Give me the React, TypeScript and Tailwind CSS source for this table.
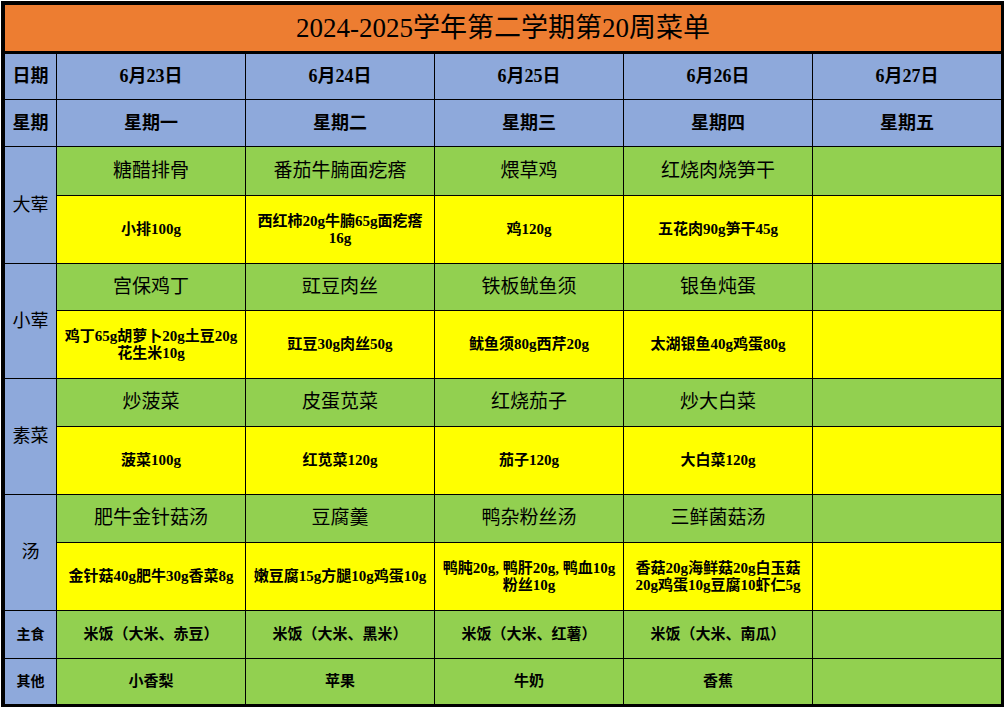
const font = { fontFamily: '"Liberation Serif", "Noto Sans CJK SC", serif' };

const dates = ["6月23日", "6月24日", "6月25日", "6月26日", "6月27日"];
const weekdays = ["星期一", "星期二", "星期三", "星期四", "星期五"];

type Course = { label: string; dishes: string[]; details: string[][] };

const courses: Course[] = [
  {
    label: "大荤",
    dishes: ["糖醋排骨", "番茄牛腩面疙瘩", "煨草鸡", "红烧肉烧笋干", ""],
    details: [["小排100g"], ["西红柿20g牛腩65g面疙瘩", "16g"], ["鸡120g"], ["五花肉90g笋干45g"], []],
  },
  {
    label: "小荤",
    dishes: ["宫保鸡丁", "豇豆肉丝", "铁板鱿鱼须", "银鱼炖蛋", ""],
    details: [["鸡丁65g胡萝卜20g土豆20g", "花生米10g"], ["豇豆30g肉丝50g"], ["鱿鱼须80g西芹20g"], ["太湖银鱼40g鸡蛋80g"], []],
  },
  {
    label: "素菜",
    dishes: ["炒菠菜", "皮蛋苋菜", "红烧茄子", "炒大白菜", ""],
    details: [["菠菜100g"], ["红苋菜120g"], ["茄子120g"], ["大白菜120g"], []],
  },
  {
    label: "汤",
    dishes: ["肥牛金针菇汤", "豆腐羹", "鸭杂粉丝汤", "三鲜菌菇汤", ""],
    details: [["金针菇40g肥牛30g香菜8g"], ["嫩豆腐15g方腿10g鸡蛋10g"], ["鸭肫20g, 鸭肝20g, 鸭血10g", "粉丝10g"], ["香菇20g海鲜菇20g白玉菇", "20g鸡蛋10g豆腐10虾仁5g"], []],
  },
];

const staples = ["米饭（大米、赤豆）", "米饭（大米、黑米）", "米饭（大米、红薯）", "米饭（大米、南瓜）", ""];
const others = ["小香梨", "苹果", "牛奶", "香蕉", ""];

const cell = "flex items-center justify-center text-center text-black";

export default function App() {
  return (
    <div className="bg-white w-[1008px] h-[711px] pt-px pl-px" style={font}>
      <div className="w-[1003px] border-t-4 border-l-4 border-r-[3px] border-b-[3px] border-black">
        <div className="h-[49px] bg-[#ED7D31] border-b-[3px] border-black flex items-center justify-center text-[27px] text-black">
          2024-2025学年第二学期第20周菜单
        </div>
        <div className="grid grid-cols-[51px_repeat(5,188px)] grid-rows-[45px_46px_48px_67px_46px_67px_47px_67px_47px_67px_47px_45px] gap-px bg-black">
          <div className={`${cell} bg-[#8EA9DB] text-[18px] font-bold`}>日期</div>
          {dates.map((d) => (
            <div key={d} className={`${cell} bg-[#8EA9DB] text-[18px] font-bold`}>{d}</div>
          ))}
          <div className={`${cell} bg-[#8EA9DB] text-[18px] font-bold`}>星期</div>
          {weekdays.map((d) => (
            <div key={d} className={`${cell} bg-[#8EA9DB] text-[18px] font-bold`}>{d}</div>
          ))}

          {courses.map((c) => (
            <>
              <div key={c.label} className={`${cell} row-span-2 bg-[#8EA9DB] text-[18px]`}>{c.label}</div>
              {c.dishes.map((d, i) => (
                <div key={c.label + "d" + i} className={`${cell} bg-[#92D050] text-[19px]`}>{d}</div>
              ))}
              {c.details.map((lines, i) => (
                <div key={c.label + "x" + i} className={`${cell} flex-col bg-[#FFFF00] text-[15px] font-bold leading-[17px] whitespace-nowrap`}>
                  {lines.map((l) => (
                    <span key={l}>{l}</span>
                  ))}
                </div>
              ))}
            </>
          ))}

          <div className={`${cell} bg-[#8EA9DB] text-[14px] font-bold`}>主食</div>
          {staples.map((s, i) => (
            <div key={"s" + i} className={`${cell} bg-[#92D050] text-[15px] font-bold`}>{s}</div>
          ))}
          <div className={`${cell} bg-[#8EA9DB] text-[14px] font-bold`}>其他</div>
          {others.map((s, i) => (
            <div key={"o" + i} className={`${cell} bg-[#92D050] text-[15px] font-bold`}>{s}</div>
          ))}
        </div>
      </div>
    </div>
  );
}
